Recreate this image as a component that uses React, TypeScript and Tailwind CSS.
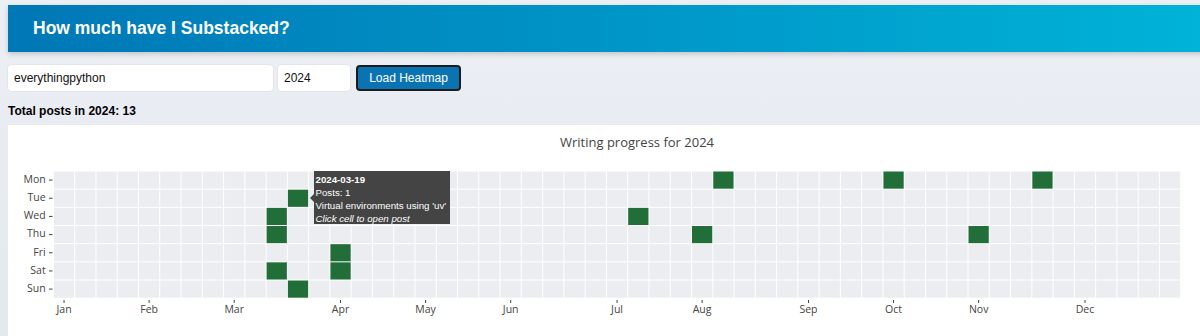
import React from "react";

const CW = 21.27;
const RH = 18.17;
const GX = 45.4;
const GY = 46;
const DAYS = ["Mon", "Tue", "Wed", "Thu", "Fri", "Sat", "Sun"];
const GREEN: Array<[number, number]> = [
  [11, 1],
  [10, 2],
  [10, 3],
  [10, 5],
  [11, 6],
  [13, 4],
  [13, 5],
  [27, 2],
  [30, 3],
  [31, 0],
  [39, 0],
  [43, 3],
  [46, 0],
];
const MONTHS: Array<[string, number]> = [
  ["Jan", 0],
  ["Feb", 4],
  ["Mar", 8],
  ["Apr", 13],
  ["May", 17],
  ["Jun", 21],
  ["Jul", 26],
  ["Aug", 30],
  ["Sep", 35],
  ["Oct", 39],
  ["Nov", 43],
  ["Dec", 48],
];

function Heatmap() {
  const green = new Set(GREEN.map(([c, r]) => `${c}-${r}`));
  const cells: React.ReactNode[] = [];
  for (let c = 0; c < 53; c++) {
    for (let r = 0; r < 7; r++) {
      const on = green.has(`${c}-${r}`);
      cells.push(
        <rect
          key={`${c}-${r}`}
          x={GX + c * CW + 0.5}
          y={GY + r * RH + 0.5}
          width={CW - 1}
          height={RH - 1}
          fill={on ? "#216e39" : "#ebedf0"}
        />
      );
    }
  }
  const font = "'Open Sans', Verdana, Arial, sans-serif";
  return (
    <svg width="1192" height="211" className="block">
      <text
        x="629"
        y="19"
        textAnchor="middle"
        dominantBaseline="middle"
        fontFamily={font}
        fontSize="13"
        fill="#444"
      >
        Writing progress for 2024
      </text>
      {cells}
      {DAYS.map((d, r) => (
        <g key={d}>
          <text
            x="37.7"
            y={GY + (r + 0.5) * RH}
            textAnchor="end"
            dominantBaseline="middle"
            fontFamily={font}
            fontSize="10.5"
            fill="#444"
          >
            {d}
          </text>
          <line
            x1="41"
            x2="44.5"
            y1={GY + (r + 0.5) * RH}
            y2={GY + (r + 0.5) * RH}
            stroke="#444"
            strokeWidth="1"
          />
        </g>
      ))}
      {MONTHS.map(([m, w]) => {
        const x = GX + (w + 0.5) * CW;
        return (
          <g key={m}>
            <line x1={x} x2={x} y1="175" y2="178" stroke="#444" strokeWidth="1" />
            <text
              x={x}
              y="185.5"
              textAnchor="middle"
              dominantBaseline="middle"
              fontFamily={font}
              fontSize="10.5"
              fill="#444"
            >
              {m}
            </text>
          </g>
        );
      })}
    </svg>
  );
}

export default function App() {
  return (
    <div className="w-[1200px] h-[336px] overflow-hidden bg-[linear-gradient(180deg,#eceff4,#e3e8ef)]">
      <div className="w-[1230px] pl-2 pt-[5px] flex flex-col">
        <div className="h-[47px] flex items-center pl-[25px] bg-[linear-gradient(90deg,#0077b6,#00b4d8)] shadow-[0_2px_5px_rgba(0,0,0,0.18)]">
          <h1 className="text-white font-bold text-[17.5px] font-['Liberation_Sans',Arial,sans-serif] leading-none">
            How much have I Substacked?
          </h1>
        </div>

        <div className="mt-[13px] flex items-center font-['Liberation_Sans',Arial,sans-serif] text-[12px]">
          <div className="w-[265px] h-[26px] bg-white rounded-[4px] flex items-center pl-[6px] text-[#111] shadow-[0_0_0_1px_rgba(0,0,0,0.03)]">
            everythingpython
          </div>
          <div className="ml-[5px] w-[72px] h-[26px] bg-white rounded-[4px] flex items-center pl-[6px] text-[#111] shadow-[0_0_0_1px_rgba(0,0,0,0.03)]">
            2024
          </div>
          <button className="ml-[6px] w-[105px] h-[26px] bg-[#0a74b3] border-2 border-[#1c1c1c] rounded-[4px] text-white text-[12px] flex items-center justify-center">
            Load Heatmap
          </button>
        </div>

        <div className="mt-[13px] font-['Liberation_Sans',Arial,sans-serif] font-bold text-[12px] leading-[14px] text-black">
          Total posts in 2024: 13
        </div>

        <div className="mt-[7px] h-[220px] bg-white relative">
          <Heatmap />
          <div className="absolute left-[306px] top-[46px] w-[136px] h-[53px] bg-[#444] text-white font-['Liberation_Sans',Arial,sans-serif] text-[9.7px] leading-[13px] pl-[1.5px] pt-[1.5px] whitespace-nowrap">
            <div className="absolute left-[-4px] top-[23px] w-0 h-0 border-y-[4px] border-y-transparent border-r-[4px] border-r-[#444]" />
            <div className="font-bold">2024-03-19</div>
            <div>Posts: 1</div>
            <div>Virtual environments using 'uv'</div>
            <div className="italic">Click cell to open post</div>
          </div>
        </div>
      </div>
    </div>
  );
}
